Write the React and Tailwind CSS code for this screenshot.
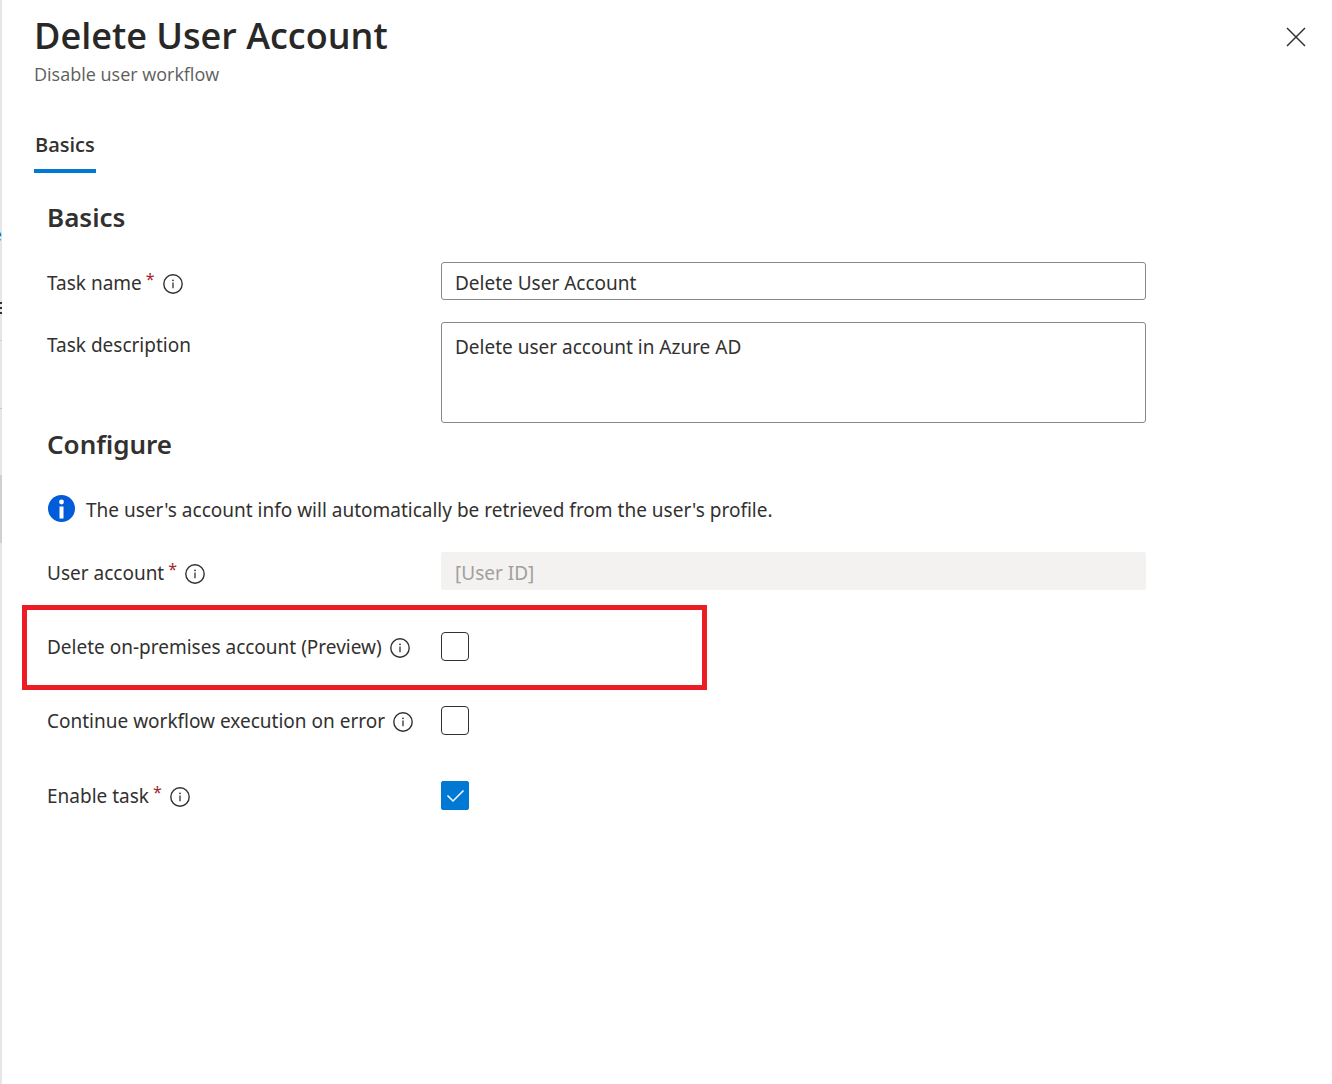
import React from "react";

function InfoIcon() {
  return (
    <svg className="mt-[3px] h-5 w-5 shrink-0" viewBox="0 0 20 20" fill="none" aria-hidden="true">
      <circle cx="10" cy="10" r="9.2" stroke="#323130" strokeWidth="1.4" />
      <path d="M10 8.4V14.2" stroke="#323130" strokeWidth="1.3" />
      <circle cx="10" cy="6.3" r="0.9" fill="#323130" />
    </svg>
  );
}

function Label({ htmlFor, required, info, children }) {
  return (
    <div className="flex h-[29px] items-center gap-2">
      <label htmlFor={htmlFor} className="flex gap-1 whitespace-nowrap">
        {children}
        {required && <span className="text-base leading-5 text-[#a4262c]">*</span>}
      </label>
      {info && <InfoIcon />}
    </div>
  );
}

function Row({ children }) {
  return <div className="grid grid-cols-[394px_minmax(0,1fr)] items-start">{children}</div>;
}

function Checkbox({ id, defaultChecked }) {
  return (
    <span className="grid h-[29px] w-7">
      <input
        id={id}
        type="checkbox"
        defaultChecked={defaultChecked}
        className="peer col-start-1 row-start-1 h-[29px] w-7 appearance-none rounded-[4px] border border-[#323130] bg-white checked:rounded-[2px] checked:border-[#0078d4] checked:bg-[#0078d4]"
      />
      <svg
        className="pointer-events-none invisible col-start-1 row-start-1 h-[29px] w-7 peer-checked:visible"
        viewBox="0 0 28 29"
        fill="none"
        aria-hidden="true"
      >
        <path d="M6.5 14.5L12 20L22.5 9.5" stroke="white" strokeWidth="1.5" />
      </svg>
    </span>
  );
}

function PageEdge() {
  return (
    <div className="flex w-[2px] shrink-0 flex-col items-end overflow-hidden bg-[#e6e6e6]" aria-hidden="true">
      <span className="mt-[220px] h-7 text-lg leading-7 text-[#0078d4]">e</span>
      <div className="mt-[54px] flex w-full flex-col gap-[3px]">
        <div className="h-[2px] bg-[#323130]" />
        <div className="h-[2px] bg-[#323130]" />
        <div className="h-[2px] bg-[#323130]" />
      </div>
      <div className="mt-[26px] h-px w-full bg-[#d2d2d2]" />
      <div className="mt-[67px] h-px w-full bg-[#c8c8c8]" />
      <div className="mt-[66px] h-[68px] w-full bg-[#d0d0d0]" />
    </div>
  );
}

export default function App() {
  return (
    <div className="flex min-h-screen bg-white font-['Noto_Sans',sans-serif] text-[19px] leading-7 text-[#323130]">
      <PageEdge />
      <main className="min-w-0 flex-1">
        <header className="flex items-start justify-between pt-3 pr-[26px] pl-8 font-['Open_Sans',sans-serif]">
          <div>
            <h1 className="text-4xl leading-12 font-semibold text-[#292827]">Delete User Account</h1>
            <p className="text-lg leading-7 text-[#605e5c]">Disable user workflow</p>
          </div>
          <button type="button" aria-label="Close" className="mt-[15px]">
            <svg className="h-5 w-5" viewBox="0 0 20 20" fill="none" aria-hidden="true">
              <path d="M1 1L19 19M19 1L1 19" stroke="#323130" strokeWidth="1.5" />
            </svg>
          </button>
        </header>

        <div role="tablist" className="mt-[43px] pl-8">
          <button
            type="button"
            role="tab"
            aria-selected="true"
            className="border-b-4 border-[#0078d4] px-px pb-[10px] font-['Open_Sans',sans-serif] text-xl leading-7 font-semibold"
          >
            Basics
          </button>
        </div>

        <form className="pr-[186px] pl-[45px]">
          <h2 className="mt-[26px] text-[26px] leading-9 font-semibold">Basics</h2>
          <div className="mt-[27px] flex flex-col gap-[22px]">
            <Row>
              <div className="pt-[6px]">
                <Label htmlFor="task-name" required info>Task name</Label>
              </div>
              <input
                id="task-name"
                type="text"
                defaultValue="Delete User Account"
                className="h-[38px] w-full rounded-[3px] border border-[#8a8886] px-[13px] pt-[3px]"
              />
            </Row>
            <Row>
              <div className="pt-2">
                <Label htmlFor="task-description">Task description</Label>
              </div>
              <textarea
                id="task-description"
                defaultValue="Delete user account in Azure AD"
                className="block h-[101px] w-full resize-none rounded-[3px] border border-[#8a8886] px-[13px] py-[10px]"
              />
            </Row>
          </div>

          <h2 className="mt-[3px] text-[26px] leading-9 font-semibold">Configure</h2>
          <div className="mt-[33px] flex items-start gap-[11px]">
            <svg className="h-7 w-7 shrink-0" viewBox="0 0 28 28" aria-hidden="true">
              <circle cx="14.5" cy="13.5" r="13.5" fill="#015cda" />
              <circle cx="14.5" cy="7" r="2.4" fill="white" />
              <rect x="12.5" y="11.5" width="4" height="12" fill="white" />
            </svg>
            <p className="pt-px">The user's account info will automatically be retrieved from the user's profile.</p>
          </div>

          <div className="mt-7">
            <Row>
              <div className="pt-[6px]">
                <Label htmlFor="user-account" required info>User account</Label>
              </div>
              <input
                id="user-account"
                type="text"
                disabled
                defaultValue="[User ID]"
                className="h-[38px] w-full rounded-[2px] bg-[#f3f2f1] px-[14px] pt-[3px] text-[#a19f9d]"
              />
            </Row>
          </div>

          <div className="mt-[15px] -ml-[25px] w-[685px] max-w-full border-5 border-[#ed1c24] px-5 pt-[22px] pb-6">
            <Row>
              <Label htmlFor="delete-on-premises" info>Delete on-premises account (Preview)</Label>
              <Checkbox id="delete-on-premises" />
            </Row>
          </div>
          <div className="mt-4 flex flex-col gap-[46px]">
            <Row>
              <Label htmlFor="continue-on-error" info>Continue workflow execution on error</Label>
              <Checkbox id="continue-on-error" />
            </Row>
            <Row>
              <Label htmlFor="enable-task" required info>Enable task</Label>
              <Checkbox id="enable-task" defaultChecked />
            </Row>
          </div>
        </form>
      </main>
    </div>
  );
}
